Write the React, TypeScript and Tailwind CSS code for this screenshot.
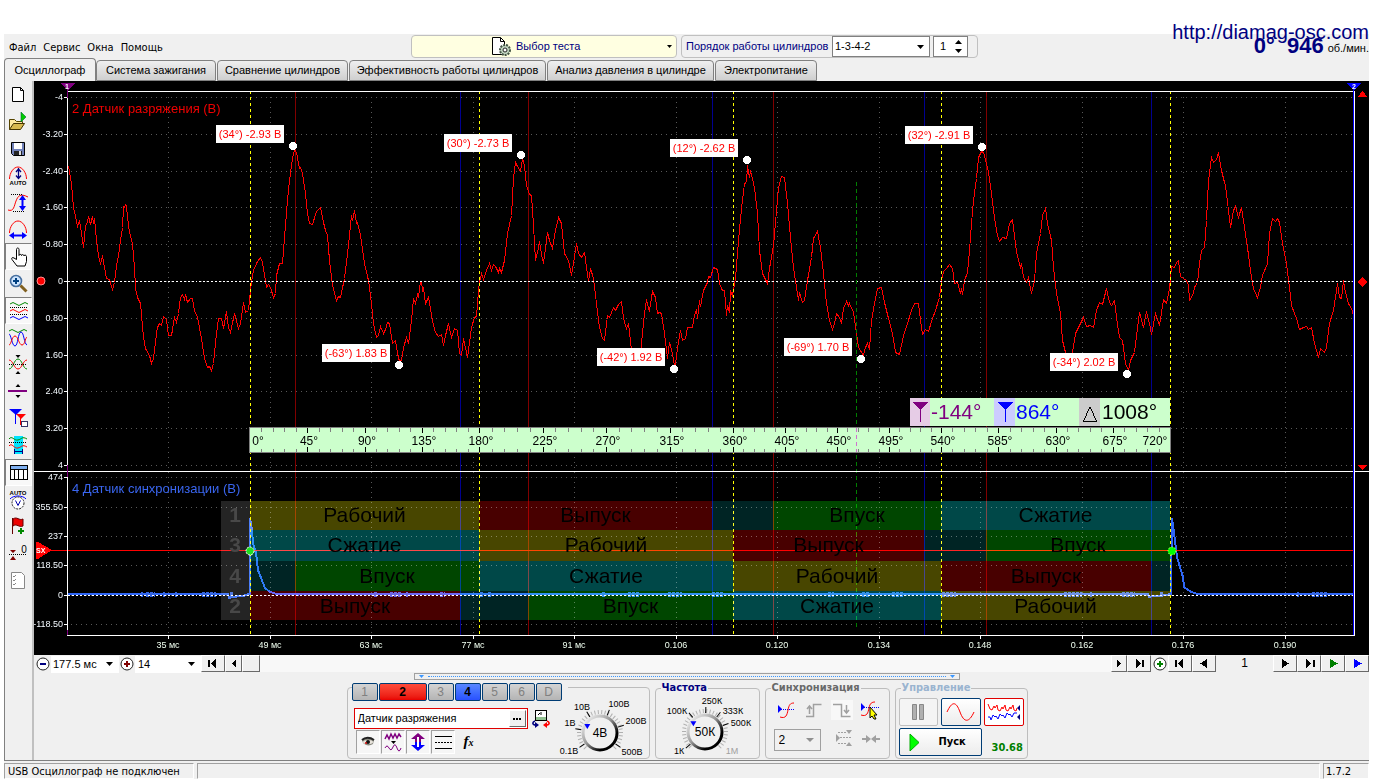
import { ReactNode } from 'react';
import clsx from 'clsx';

/* ------------------------------------------------------------------ */
/* Data                                                                */
/* ------------------------------------------------------------------ */

const menuItems = ['Файл', 'Сервис', 'Окна', 'Помощь'];

const tabs = [
  { title: 'Система зажигания', width: 'w-[120px]' },
  { title: 'Сравнение цилиндров', width: 'w-[131px]' },
  { title: 'Эффективность работы цилиндров', width: 'w-[197px]' },
  { title: 'Анализ давления в цилиндре', width: 'w-[167px]' },
  { title: 'Электропитание', width: 'w-[102px]' },
];

const gridX = [
  { x: 168, label: '35 мс' },
  { x: 270, label: '49 мс' },
  { x: 371, label: '63 мс' },
  { x: 473, label: '77 мс' },
  { x: 574, label: '91 мс' },
  { x: 676, label: '0.106' },
  { x: 777, label: '0.120' },
  { x: 879, label: '0.134' },
  { x: 980, label: '0.148' },
  { x: 1082, label: '0.162' },
  { x: 1183, label: '0.176' },
  { x: 1285, label: '0.190' },
];

const gridY = [
  { y: 97, label: '-4' },
  { y: 134, label: '-3.20' },
  { y: 171, label: '-2.40' },
  { y: 207, label: '-1.60' },
  { y: 244, label: '-0.80' },
  { y: 281, label: '0' },
  { y: 318, label: '0.80' },
  { y: 355, label: '1.60' },
  { y: 391, label: '2.40' },
  { y: 428, label: '3.20' },
  { y: 465, label: '4' },
  { y: 477, label: '474' },
  { y: 507, label: '355.50' },
  { y: 536, label: '237' },
  { y: 565, label: '118.50' },
  { y: 595, label: '0' },
  { y: 624, label: '-118.50' },
];

// 0, 180, 360, 540 and 720 degrees
const deadCenters = [250, 479, 733, 941, 1170];
const valveOpen = [295, 528, 773, 986];
const valveClose = [460, 712, 924, 1151];

const callouts = [
  { x: 216, y: 125, text: '(34°) -2.93 В', dot: [293, 146] },
  { x: 444, y: 134, text: '(30°) -2.73 В', dot: [521, 155] },
  { x: 670, y: 139, text: '(12°) -2.62 В', dot: [747, 160] },
  { x: 905, y: 126, text: '(32°) -2.91 В', dot: [982, 147] },
  { x: 322, y: 344, text: '(-63°) 1.83 В', dot: [399, 365] },
  { x: 597, y: 348, text: '(-42°) 1.92 В', dot: [674, 369] },
  { x: 784, y: 338, text: '(-69°) 1.70 В', dot: [861, 359] },
  { x: 1050, y: 353, text: '(-34°) 2.02 В', dot: [1127, 374] },
];

const strokeColors: Record<string, string> = {
  'Рабочий': '#484600',
  'Выпуск': '#480000',
  'Впуск': '#004600',
  'Сжатие': '#004848',
  '': '#002424',
};

const cylinders = [
  { no: 1, y: 501, h: 29, base: 522, strokes: [[250, 479, 'Рабочий'], [479, 712, 'Выпуск'], [712, 773, ''], [773, 941, 'Впуск'], [941, 1170, 'Сжатие']] },
  { no: 3, y: 530, h: 31, base: 552, strokes: [[250, 479, 'Сжатие'], [479, 733, 'Рабочий'], [733, 924, 'Выпуск'], [924, 986, ''], [986, 1170, 'Впуск']] },
  { no: 4, y: 561, h: 30, base: 583, strokes: [[250, 295, ''], [295, 479, 'Впуск'], [479, 733, 'Сжатие'], [733, 941, 'Рабочий'], [941, 1151, 'Выпуск'], [1151, 1170, '']] },
  { no: 2, y: 591, h: 29, base: 613, strokes: [[250, 460, 'Выпуск'], [460, 528, ''], [528, 733, 'Впуск'], [733, 941, 'Сжатие'], [941, 1170, 'Рабочий']] },
] as { no: number; y: number; h: number; base: number; strokes: [number, number, string][] }[];

const vacuumTrace =
  '68,166 70,177 71,183 73,207 75,216 77,226 79,220 81,233 83,247 85,225 87,222 88,216 90,224 92,216 93,223 94,218 96,240 98,255 100,264 102,255 ' +
  '104,267 106,278 109,279 110,283 112,289 114,282 116,265 118,255 120,240 122,227 123,206 124,207 125,204 126,205 127,217 129,232 132,243 134,267 135,288 137,297 ' +
  '140,303 143,337 145,348 149,355 151,363 153,358 156,333 157,327 159,323 161,325 163,316 166,319 168,335 171,335 174,317 176,322 178,313 180,297 182,294 184,299 ' +
  '185,294 187,302 190,298 192,298 194,310 197,317 201,338 204,358 207,367 209,366 211,370 213,363 216,333 218,318 221,318 223,328 226,311 228,327 230,332 234,313 ' +
  '238,328 240,323 243,302 245,312 248,310 250,290 251,282 253,270 257,261 260,257 262,262 266,287 268,284 270,287 273,297 275,293 276,275 279,263 282,263 284,237 ' +
  '287,200 289,180 292,158 294,149 296,152 299,168 300,167 302,173 305,193 307,213 309,223 312,224 316,211 320,207 323,222 325,230 327,235 329,260 332,285 336,300 ' +
  '338,296 340,297 344,278 348,245 351,215 352,220 354,210 356,223 357,222 360,235 364,263 368,280 371,303 373,323 376,337 378,335 380,326 383,333 385,329 387,322 ' +
  '389,323 392,343 395,340 397,353 399,361 401,360 403,347 406,337 408,343 411,320 413,298 415,303 417,294 418,297 420,281 421,281 422,290 423,288 425,303 428,297 ' +
  '430,308 432,321 435,332 438,336 441,334 443,345 445,335 448,323 451,337 454,328 457,330 459,353 461,355 463,338 467,357 471,327 474,317 476,316 478,290 479,282 ' +
  '481,273 483,279 486,270 489,263 491,270 493,264 495,266 498,272 499,268 501,272 504,260 507,233 511,215 513,178 515,162 517,166 520,171 522,158 524,165 526,185 ' +
  '529,194 531,195 533,225 535,260 538,247 539,241 541,254 543,263 547,232 549,240 552,248 555,230 558,217 561,223 564,253 568,260 571,275 573,263 576,243 578,253 ' +
  '581,257 584,252 586,267 588,281 590,268 593,278 596,303 599,327 602,338 604,340 607,315 609,317 613,307 615,310 618,304 621,301 623,318 626,328 628,323 631,350 ' +
  '635,358 640,353 641,343 644,313 646,299 648,308 649,310 652,291 655,297 657,313 659,312 661,313 664,333 667,358 669,342 672,353 674,365 675,363 677,348 680,330 ' +
  '682,340 685,338 687,327 692,327 694,315 696,309 697,318 699,300 700,306 703,290 707,282 708,276 710,277 713,267 717,269 719,283 722,290 724,290 726,315 727,305 ' +
  '729,312 730,291 732,295 735,278 738,240 741,208 744,183 746,182 747,165 749,177 750,170 753,183 754,187 757,213 759,250 762,273 767,283 769,268 773,245 775,222 ' +
  '778,187 781,176 784,177 787,203 790,237 793,267 796,287 798,300 799,292 802,302 804,300 807,280 811,257 813,238 817,231 820,247 823,273 826,303 829,320 832,329 ' +
  '834,323 836,313 839,317 841,323 843,308 846,301 848,305 849,303 853,312 856,333 858,347 863,355 865,347 867,343 869,349 871,320 874,303 877,288 881,287 884,302 ' +
  '888,318 892,333 895,352 899,354 903,335 907,323 911,310 914,303 918,303 920,320 922,334 925,329 928,331 932,318 935,310 939,297 941,280 943,271 946,268 949,264 ' +
  '952,268 954,283 957,282 960,293 961,288 962,294 964,280 967,272 969,250 971,223 973,200 976,178 978,157 981,151 983,152 986,163 988,172 991,193 994,217 997,235 ' +
  '999,241 1002,237 1006,238 1009,223 1012,219 1014,235 1016,252 1020,267 1021,263 1023,277 1026,282 1028,277 1031,293 1034,280 1036,253 1040,233 1042,215 1045,208 ' +
  '1047,223 1051,240 1053,267 1056,293 1060,313 1062,340 1065,352 1067,355 1072,352 1075,333 1079,325 1083,317 1086,326 1090,325 1093,327 1096,310 1099,302 1102,304 ' +
  '1106,288 1109,302 1111,305 1114,300 1116,317 1119,337 1122,340 1125,363 1128,370 1130,360 1134,352 1137,327 1139,312 1143,327 1146,311 1149,323 1151,334 1155,313 ' +
  '1159,325 1163,299 1166,303 1169,288 1171,266 1174,267 1176,262 1178,260 1180,276 1183,278 1186,280 1188,285 1189,300 1193,293 1194,287 1197,282 1199,263 1201,250 ' +
  '1204,247 1206,220 1208,180 1211,157 1213,162 1216,159 1218,152 1221,170 1224,182 1225,185 1228,210 1230,227 1233,210 1235,206 1238,217 1241,207 1244,227 1247,247 ' +
  '1250,270 1253,288 1257,297 1260,287 1262,275 1267,263 1269,233 1272,218 1275,221 1277,218 1279,222 1282,243 1286,263 1289,287 1291,305 1296,318 1299,329 1303,327 ' +
  '1306,326 1308,329 1311,327 1314,343 1318,357 1320,348 1324,352 1326,347 1329,323 1333,310 1337,283 1339,297 1341,298 1343,280 1345,292 1348,303 1352,310 1353,317';

const syncTrace =
  '68,594 228,594 229,598 232,597 236,597 237,596 243,596 249,594 250,594 250,518 252,530 253,543 256,553 ' +
  '258,570 263,583 265,588 270,592 277,594 297,594 298,595 299,594 1148,594 1149,597 1153,596 1160,596 1171,594 1172,518 1174,533 1177,557 1183,577 1184,587 1191,592 1198,594 1205,594 1353,594';

// short bursts of noise on the sync channel: start and length
const syncNoise = [
  [141, 2], [146, 9], [163, 2], [175, 2], [202, 14], [230, 3], [374, 3], [390, 12], [406, 2], [440, 5], [480, 3], [488, 4],
  [602, 4], [628, 12], [668, 14], [712, 4], [716, 8], [828, 6], [862, 8], [892, 12], [942, 14], [1064, 18], [1090, 2], [1122, 13], [1160, 4], [1297, 2], [1312, 16],
];

const rulerX = (deg: number) => {
  const i = Math.min(Math.floor(deg / 180), 3);
  return Math.round(deadCenters[i] + ((deadCenters[i + 1] - deadCenters[i]) * (deg - i * 180)) / 180);
};

/* ------------------------------------------------------------------ */
/* Small controls                                                      */
/* ------------------------------------------------------------------ */

function NavButton({ label, width, children }: { label: string; width: string; children: ReactNode }) {
  return (
    <button
      aria-label={label}
      className={clsx(
        'flex h-[17px] shrink-0 items-center justify-center border border-t-white border-l-white border-r-[#696969] border-b-[#696969] bg-[#f0f0f0]',
        width,
      )}
    >
      <svg width="14" height="11" viewBox="0 0 14 11" shapeRendering="crispEdges">{children}</svg>
    </button>
  );
}

function ZoomSign({ plus, color }: { plus?: boolean; color: string }) {
  return (
    <svg width="14" height="14" viewBox="0 0 14 14">
      <circle cx="7" cy="7" r="6" fill="#fff" stroke="#222" />
      <rect x="4" y="6" width="6" height="2" fill={color} />
      {plus && <rect x="6" y="4" width="2" height="6" fill={color} />}
    </svg>
  );
}

function Group({ title, titleClass, className, children }: { title: string; titleClass: string; className: string; children: ReactNode }) {
  return (
    <fieldset className={clsx('h-[78px] min-w-0 shrink-0 rounded border border-[#bdbdbd] px-[3px]', className)}>
      <legend className={clsx('ml-[2px] h-[14px] px-px font-[DejaVu_Sans_Condensed,DejaVu_Sans,sans-serif] text-[11px] leading-[14px] font-bold', titleClass)}>
        {title}
      </legend>
      {children}
    </fieldset>
  );
}

type KnobMark = { text: string; x: number; y: number; dim?: boolean };

function Knob({ value, pointer, marks, ticks, width }: { value: string; pointer: number; marks: KnobMark[]; ticks: number[]; width: number }) {
  const small = Array.from({ length: 30 }, (_, i) => 135 + i * (270 / 29));
  const cx = 50;
  const cy = 45;
  return (
    <svg className="shrink-0" width={width} height="70" viewBox={`0 0 ${width} 70`} role="img" aria-label={value}>
      <defs>
        <linearGradient id={`rim-${value}`} x1="0" y1="0" x2="1" y2="1">
          <stop offset="0" stopColor="#fff" />
          <stop offset="0.45" stopColor="#999" />
          <stop offset="0.75" stopColor="#000" />
        </linearGradient>
      </defs>
      {small.map((a) => (
        <line key={a} x1="19" x2="23" y1="0" y2="0" stroke="#b0b0b0" transform={`translate(${cx} ${cy}) rotate(${a})`} />
      ))}
      {ticks.map((a) => (
        <line key={a} x1="19" x2="25" y1="0" y2="0" stroke="#000" transform={`translate(${cx} ${cy}) rotate(${a})`} />
      ))}
      <circle cx={cx} cy={cy} r="17" fill="#f0f0f0" stroke={`url(#rim-${value})`} strokeWidth="3" />
      <path d="M-3 -3h6l-3 5z" fill="#00f" transform={`translate(${cx} ${cy}) rotate(${pointer}) translate(14 0) rotate(${-pointer})`} />
      <text x={cx} y={cy + 4} textAnchor="middle" fontSize="12" fill="#000">{value}</text>
      {marks.map((m) => (
        <text key={m.text} x={m.x} y={m.y} textAnchor="middle" fontSize="9" fill={m.dim ? '#a0a0a0' : '#000'}>{m.text}</text>
      ))}
    </svg>
  );
}

/* ------------------------------------------------------------------ */
/* Left toolbar                                                        */
/* ------------------------------------------------------------------ */

const tools: { label: string; pressed?: boolean; icon: ReactNode }[] = [
  { label: 'Новый', icon: <path d="M4.500 3.500h8l3 3v11h-11zM12.500 3.500v3h3" fill="#fff" stroke="#000" /> },
  {
    label: 'Открыть',
    icon: (
      <>
        <path d="M1.500 18.500v-10h5l2 2h6v2" fill="#ffe9a0" stroke="#554400" />
        <path d="M1.500 18.500l4-6h11l-4 6z" fill="#d8b850" stroke="#443300" />
        <path d="M13 1l5 5-5 5z" fill="#0c0" stroke="#063" strokeWidth=".6" />
      </>
    ),
  },
  {
    label: 'Сохранить',
    icon: (
      <>
        <path d="M3.500 4.500h13v13h-11l-2-2z" fill="#7080b8" stroke="#000" />
        <rect x="6" y="5" width="8" height="6" fill="#fff" />
        <rect x="6" y="13" width="8" height="4" fill="#222" />
        <rect x="11" y="13" width="2" height="4" fill="#ddd" />
      </>
    ),
  },
  {
    label: 'Автомасштаб',
    icon: (
      <>
        <path d="M1.500 14c0-6 4-12 8.500-12s8.500 6 8.500 12" fill="none" stroke="#f00" />
        <path d="M10.500 3v10M8 7l2.500-3L13 7M8 10.500l2.500 3 2.500-3" fill="none" stroke="#000080" strokeWidth="1.300" />
        <text x="10" y="20" textAnchor="middle" fontSize="6" fontWeight="bold">AUTO</text>
      </>
    ),
  },
  {
    label: 'Размах',
    icon: (
      <>
        <path d="M0 18c6 2 6-4 8-9s4-8 12-4" fill="none" stroke="#f00" />
        <path d="M3 2.500h12M5 19.500h12" stroke="#000" strokeDasharray="1 1" />
        <path d="M14.500 5v12" stroke="#00f" strokeWidth="2" />
        <path d="M11 8l3.500-5L18 8zM11 14l3.500 5 3.500-5z" fill="#00f" />
      </>
    ),
  },
  {
    label: 'Период',
    icon: (
      <>
        <path d="M1.500 14c0-6 4-12 8.500-12s8.500 6 8.500 12" fill="none" stroke="#f00" />
        <path d="M4 16.500h12" stroke="#00f" strokeWidth="2" />
        <path d="M6 13l-5 3.500L6 20zM14 13l5 3.500-5 3.500z" fill="#00f" />
      </>
    ),
  },
  {
    label: 'Рука',
    pressed: true,
    icon: (
      <path
        d="M8.500 13.500v-10c0-2 2.500-2 2.500 0v6c0-1.500 2.500-1.500 2.500 0 0-1.500 2.500-1 2.500.5 0-1.500 2.500-1 2.500.5v5l-1.500 4.500h-8l-5-6.500c-1-1.500.5-2.500 2-1.500z"
        fill="#fff"
        stroke="#000"
      />
    ),
  },
  {
    label: 'Лупа',
    icon: (
      <>
        <circle cx="8" cy="8" r="5.500" fill="#cfe6ff" stroke="#4870a0" strokeWidth="1.600" />
        <path d="M8 5v6M5 8h6" stroke="#004080" strokeWidth="2" />
        <path d="M12.500 12.500l6 6" stroke="#806020" strokeWidth="3" />
      </>
    ),
  },
  {
    label: 'Раздельно',
    pressed: true,
    icon: (
      <g fill="none">
        <path d="M2 4q3-3 6 0t6 0 6 0" stroke="#080" />
        <path d="M2 7.500h18M2 14.500h18" stroke="#000" strokeDasharray="1 1" />
        <path d="M2 11q3-3 6 0t6 0 6 0" stroke="#f00" />
        <path d="M2 18q3-3 6 0t6 0 6 0" stroke="#00f" />
      </g>
    ),
  },
  {
    label: 'Совместно',
    icon: (
      <g fill="none">
        <path d="M1 4q3-3 6 0t6 0 6 0" stroke="#080" />
        <path d="M1 7c2 0 3 12 6 12s3-14 6-14 3 12 6 13" stroke="#00f" />
        <path d="M1 18c2 0 3-9 6-9s4 9 7 9 3-7 5-8" stroke="#f00" />
      </g>
    ),
  },
  {
    label: 'Центровать',
    icon: (
      <g fill="none">
        <path d="M1 15c4 0 5-10 9-10s5 10 9 10" stroke="#080" />
        <path d="M1 6c4 0 5 9 9 9s5-9 9-9" stroke="#f00" />
        <path d="M1 10.500h18" stroke="#000" strokeDasharray="1 1" />
        <path d="M7.500 1h5L10 4zM7.500 20h5L10 17z" fill="#000" />
      </g>
    ),
  },
  {
    label: 'Уровень',
    icon: (
      <>
        <rect x="0" y="9" width="19" height="2" fill="#800080" />
        <path d="M7.500 6h5L10 3zM7.500 14h5L10 17z" fill="#000" />
      </>
    ),
  },
  {
    label: 'Маркеры',
    icon: (
      <>
        <path d="M1 1h13L8 7z" fill="#00f" />
        <path d="M7.500 3v13" stroke="#00f" />
        <path d="M8 6h10l-5 5z" fill="#f00" />
        <path d="M12.500 8v9" stroke="#f00" />
        <rect x="13.500" y="13.500" width="6" height="5" fill="#fff" stroke="#336" />
      </>
    ),
  },
  {
    label: 'Область',
    icon: (
      <g fill="none">
        <rect x="6" y="1" width="9" height="18" fill="#00e5ff" />
        <path d="M1 4c3-4 5 2 9 1s4-4 9-1" stroke="#080" />
        <path d="M1 7.500h18" stroke="#000" strokeDasharray="1 1" />
        <path d="M1 11c3-4 5 3 9 2s4-4 9-1" stroke="#f00" />
        <path d="M6 16.500h9M6.500 14v5M14.500 14v5" stroke="#000080" />
      </g>
    ),
  },
  {
    label: 'Таблица',
    pressed: true,
    icon: (
      <>
        <rect x="2.500" y="3.500" width="17" height="14" fill="#fff" stroke="#000" />
        <rect x="3" y="4" width="16" height="3" fill="#80b0f0" />
        <path d="M2 7.500h18M6.500 7v10M10.500 7v10M15.500 7v10" stroke="#000" />
      </>
    ),
  },
  {
    label: 'Автоизмерение',
    icon: (
      <>
        <text x="10" y="6" textAnchor="middle" fontSize="6" fontWeight="bold">AUTO</text>
        <path d="M2 10c3-4 13-4 16 0" fill="none" stroke="#00f" />
        <circle cx="10" cy="14" r="6" fill="#fff" stroke="#222" strokeDasharray="2 1" />
        <path d="M7.500 11.500l2.500 5 2.500-5" fill="none" stroke="#00a" />
      </>
    ),
  },
  {
    label: 'Метка',
    icon: (
      <>
        <path d="M4.500 2v16" stroke="#600" />
        <path d="M5 3c4-3 6 2 10 0v7c-4 2-6-3-10 0z" fill="#e00" stroke="#600" />
        <path d="M13 12v6M10 15h6" stroke="#080" strokeWidth="2" />
      </>
    ),
  },
  {
    label: 'Ноль',
    icon: (
      <>
        <path d="M2 7h6l-3 3zM2 17h6l-3-4z" fill="#800000" />
        <path d="M1 11.500h18" stroke="#000" strokeDasharray="1 1" />
        <text x="16" y="10" textAnchor="middle" fontSize="10">0</text>
      </>
    ),
  },
  {
    label: 'Отчёт',
    icon: (
      <>
        <path d="M3.500 2.500h10l3 3v13h-13z" fill="#fff" stroke="#888" />
        <path d="M5 6l1 1 2-2M5 10l1 1 2-2M5 14l1 1 2-2" fill="none" stroke="#888" />
      </>
    ),
  },
];

function Toolbar() {
  return (
    <div className="flex w-[29px] shrink-0 flex-col border-r-2 border-r-[#c0c0c0]">
      {tools.map((tool) => (
        <button
          key={tool.label}
          aria-label={tool.label}
          aria-pressed={tool.pressed}
          className={clsx(
            'flex h-[27px] w-full items-center justify-center border',
            tool.pressed ? 'border-t-[#808080] border-l-[#808080] border-r-white border-b-white bg-[#f8f8f8]' : 'border-transparent',
          )}
        >
          <svg width="22" height="22" viewBox="0 0 22 22">{tool.icon}</svg>
        </button>
      ))}
    </div>
  );
}

/* ------------------------------------------------------------------ */
/* Oscilloscope screen                                                 */
/* ------------------------------------------------------------------ */

function Ruler() {
  const degrees = Array.from({ length: 81 }, (_, i) => i * 9);
  return (
    <g>
      <rect x="249" y="427" width="922" height="26" fill="#808080" />
      <rect x="250" y="428" width="920" height="24" fill="#ccffcc" />
      {degrees.slice(1, -1).map((deg) => {
        const major = deg % 45 === 0;
        return (
          <g key={deg} fill={major ? '#000' : '#808080'}>
            <rect x={rulerX(deg)} y="428" width="1" height={major ? 5 : 4} />
            <rect x={rulerX(deg)} y={major ? 447 : 449} width="1" height={major ? 5 : 3} />
          </g>
        );
      })}
      {Array.from({ length: 17 }, (_, i) => i * 45).map((deg) => (
        <text
          key={deg}
          x={deg === 0 ? 258 : deg === 720 ? 1155 : rulerX(deg) + 2}
          y="445"
          textAnchor="middle"
          fontSize="12"
          fill="#000"
        >
          {deg}°
        </text>
      ))}
      <line x1="856.500" x2="856.500" y1="428" y2="452" stroke="#d070d0" strokeDasharray="4 3" />
    </g>
  );
}

function MarkerReadout() {
  return (
    <g fontSize="21">
      <rect x="910" y="398" width="260" height="28" fill="#ccffcc" />
      <rect x="910" y="398" width="20" height="28" fill="#e6cce6" />
      <rect x="994" y="398" width="21" height="28" fill="#ccccff" />
      <rect x="1079" y="398" width="21" height="28" fill="#cccccc" />
      <path d="M912 402h16l-7 7v13h-1v-13z" fill="#800080" />
      <path d="M997 402h16l-7 7v13h-1v-13z" fill="#0000ff" />
      <path d="M1083.500 421.500h13l-6-14h-1z" fill="none" stroke="#000" />
      <text x="931" y="419" fill="#800080">-144°</text>
      <text x="1016" y="419" fill="#0000ff">864°</text>
      <text x="1102" y="419" fill="#000">1008°</text>
    </g>
  );
}

function Screen() {
  return (
    <svg
      viewBox="34 81 1335 574"
      className="isolate block h-auto w-full bg-black"
      fontFamily="Liberation Sans, Arial, sans-serif"
      shapeRendering="crispEdges"
      role="img"
      aria-label="Осциллограмма"
    >
      {/* dotted grid */}
      <g stroke="#585858" strokeDasharray="1 4" transform="translate(.5 .5)">
        {gridY.map(({ y }) => <line key={y} x1="70" x2="1353" y1={y} y2={y} />)}
        {gridX.map(({ x }) => <line key={x} x1={x} x2={x} y1="96" y2="635" />)}
      </g>

      {/* valve timing lines */}
      {valveOpen.map((x) => <rect key={x} x={x} y="92" width="1" height="543" fill="#800000" />)}
      {valveClose.map((x) => <rect key={x} x={x} y="92" width="1" height="543" fill="#000090" />)}

      <polyline points={vacuumTrace} fill="none" stroke="#ff0000" transform="translate(.5 .5)" />

      {/* sync channel */}
      <polyline points={syncTrace} fill="none" stroke="#2f66f5" strokeWidth="2" />
      <g stroke="#3566e0" strokeWidth="5" strokeDasharray="3 1">
        {syncNoise.map(([x, w]) => <line key={x} x1={x} x2={x + w} y1="594.500" y2="594.500" />)}
      </g>
      <rect x="50" y="550" width="1303" height="1" fill="#ff0000" />

      {/* zero levels */}
      <g stroke="#fff" strokeDasharray="2 2" transform="translate(.5 .5)">
        <line x1="67" x2="1353" y1="281" y2="281" />
        <line x1="67" x2="1353" y1="595" y2="595" />
      </g>

      {/* dead centers */}
      <g stroke="#ffff00" strokeDasharray="3 3" transform="translate(.5 0)">
        {deadCenters.map((x) => <line key={x} x1={x} x2={x} y1="91" y2="635" />)}
      </g>
      <line x1="856.500" x2="856.500" y1="182" y2="629" stroke="#008000" strokeDasharray="4 3" />

      {/* axes */}
      <g fill="#fff">
        <rect x="67" y="91" width="1288" height="1" />
        <rect x="34" y="471" width="1335" height="1" />
        <rect x="67" y="635" width="1288" height="1" />
        <rect x="67" y="91" width="1" height="545" />
        <rect x="1354" y="91" width="1" height="545" />
        {gridY.map(({ y }) => <rect key={y} x="64" y={y} width="3" height="1" />)}
        {gridX.map(({ x }) => <rect key={x} x={x} y="636" width="1" height="3" />)}
      </g>
      <rect x="67" y="88" width="1" height="10" fill="#800080" />
      <rect x="67" y="465" width="1" height="12" fill="#800080" />
      <rect x="67" y="630" width="1" height="5" fill="#800080" />
      <rect x="1353" y="88" width="1" height="547" fill="#0000ff" />

      <g fontSize="9" fill="#f4faff" textAnchor="end">
        {gridY.map(({ y, label }) => <text key={y} x="63" y={y + 3}>{label}</text>)}
      </g>
      <g fontSize="9" fill="#f0fff0" textAnchor="middle">
        {gridX.map(({ x, label }) => <text key={x} x={x} y="648">{label}</text>)}
      </g>

      {/* cylinder strokes */}
      {cylinders.map((cyl) => (
        <g key={cyl.no} className="mix-blend-screen">
          <rect x="221" y={cyl.y} width="29" height={cyl.h} fill="#242424" />
          {cyl.strokes.map(([from, to, name]) => (
            <rect key={from} x={from} y={cyl.y} width={to - from} height={cyl.h} fill={strokeColors[name]} />
          ))}
        </g>
      ))}
      {cylinders.map((cyl) => (
        <g key={cyl.no} fontSize="21" textAnchor="middle">
          <text x="235" y={cyl.base} fontWeight="bold" fill="#484848">{cyl.no}</text>
          {cyl.strokes.map(([from, to, name]) => (
            <text key={from} x={(from + to) / 2} y={cyl.base} fill="#000">{name}</text>
          ))}
        </g>
      ))}

      <text x="72" y="113" fontSize="13" fill="#f00000">2 Датчик разряжения (В)</text>
      <text x="72" y="493" fontSize="13" fill="#3a66f0">4 Датчик синхронизации (В)</text>

      {callouts.map((c) => (
        <g key={c.text}>
          <rect x={c.x} y={c.y} width="68" height="18" fill="#fff" />
          <text x={c.x + 34} y={c.y + 13} textAnchor="middle" fontSize="11" fill="#ff0000">{c.text}</text>
          <circle cx={c.dot[0]} cy={c.dot[1]} r="4" fill="#fff" />
        </g>
      ))}

      <MarkerReadout />
      <Ruler />

      {/* trigger level and points */}
      <path d="M36 542h2l14 8-14 9h-2z" fill="#ff0000" />
      <text x="36" y="553" fontSize="7" fontWeight="bold" fill="#fff">SX</text>
      <g shapeRendering="geometricPrecision">
        <circle cx="250" cy="551" r="4" fill="#22dd22" stroke="#fff" strokeDasharray="2 1" />
        <circle cx="1172" cy="551" r="4" fill="#00ff00" stroke="#ffff80" strokeDasharray="1 2" />
        <circle cx="41" cy="281" r="4" fill="#ff0000" stroke="#ff9090" />
      </g>

      {/* channel handles */}
      <path d="M1358 97h9l-4-6h-1zM1362 277l5 5-5 5-4-5zM1358 465h9l-4 5h-1z" fill="#ff0000" />
      <path d="M60 83h15l-7 7h-1z" fill="#800080" />
      <path d="M1346 83h15l-7 7h-1z" fill="#0000ff" />
      <g fontSize="7" fontWeight="bold" fill="#fff" textAnchor="middle">
        <text x="67" y="89">1</text>
        <text x="1354" y="89">2</text>
      </g>
    </svg>
  );
}

/* ------------------------------------------------------------------ */
/* Header                                                              */
/* ------------------------------------------------------------------ */

function Header() {
  return (
    <header className="relative flex h-6 items-center text-[11px]">
      <nav className="flex w-[407px] shrink-0 gap-[7px] pt-[3px] pl-[5px]">
        {menuItems.map((item) => (
          <button key={item} className="font-[DejaVu_Sans_Condensed,DejaVu_Sans,sans-serif] leading-4">{item}</button>
        ))}
      </nav>
      <button className="relative flex h-[23px] w-[266px] shrink-0 items-center rounded border border-[#c0c0c0] bg-[#ffffe1] pl-[79px] text-[#000080]">
        <svg width="22" height="21" viewBox="0 0 22 21">
          <path d="M1.500 1.500h8l4 4v13h-12z" fill="#fff" stroke="#000" />
          <path d="M9.500 1.500v4h4" fill="none" stroke="#000" />
          <circle cx="14" cy="14" r="5" fill="#c0d4c0" stroke="#445544" strokeWidth="2" strokeDasharray="2 1" />
          <circle cx="14" cy="14" r="2" fill="#fff" stroke="#222" />
        </svg>
        <span className="ml-[3px]">Выбор теста</span>
        <svg className="mr-1 ml-auto" width="5" height="3" viewBox="0 0 5 3"><path d="M0 0h5L2.500 3z" /></svg>
      </button>
      <div className="ml-[4px] flex h-[23px] w-[297px] shrink-0 items-center rounded border border-[#c0c0c0] pl-1">
        <label htmlFor="order" className="w-[146px] whitespace-nowrap text-[#000080]">Порядок работы цилиндров</label>
        <div className="relative">
          <select id="order" className="h-[21px] w-[98px] appearance-none border border-[#808080] bg-white pl-[2px]">
            <option>1-3-4-2</option>
          </select>
          <svg className="pointer-events-none absolute top-[9px] right-[6px]" width="7" height="4" viewBox="0 0 7 4"><path d="M0 0h7L3.500 4z" /></svg>
        </div>
        <div className="relative ml-[3px]">
          <input aria-label="Цилиндр" defaultValue="1" className="h-[21px] w-[35px] border border-[#808080] bg-white pl-[6px]" />
          <svg className="pointer-events-none absolute top-[4px] right-[6px]" width="7" height="13" viewBox="0 0 7 13">
            <path d="M0 4h7L3.500 0zM0 9h7L3.500 13z" />
          </svg>
        </div>
      </div>
      <div className="absolute top-0 right-0 flex items-center text-[#000080]">
        <span className="text-[22px] leading-6 font-bold whitespace-pre">0°  946</span>
        <span className="mt-1 ml-1 text-black">об./мин.</span>
      </div>
      <a href="http://diamag-osc.com" className="absolute right-0 bottom-[14px] text-[20px] leading-6 text-[#000080]">
        http://diamag-osc.com
      </a>
    </header>
  );
}

function Tabs() {
  return (
    <div className="flex h-[23px] items-end text-[11px]" role="tablist">
      <button role="tab" aria-selected="true" className="h-[23px] w-[92px] rounded-t border border-b-0 border-[#808080] bg-[#f0f0f0]">
        Осциллограф
      </button>
      {tabs.map((tab) => (
        <button
          key={tab.title}
          role="tab"
          aria-selected="false"
          className={clsx(
            'mr-px h-[21px] rounded-t border border-[#808080] bg-linear-to-b from-[#efefef] to-[#cfcfcf] whitespace-nowrap',
            tab.width,
          )}
        >
          {tab.title}
        </button>
      ))}
    </div>
  );
}

/* ------------------------------------------------------------------ */
/* Scroll bar under the screen                                         */
/* ------------------------------------------------------------------ */

function ScrollRow() {
  return (
    <div className="flex h-[18px] items-start">
      <button aria-label="Сжать" className="flex h-[17px] w-[17px] items-center justify-center"><ZoomSign color="#000080" /></button>
      <div className="relative">
        <select aria-label="Время" className="h-[17px] w-[68px] appearance-none bg-white pl-[2px] text-[11px] leading-4">
          <option>177.5 мс</option>
        </select>
        <svg className="pointer-events-none absolute top-[7px] right-[6px]" width="7" height="4" viewBox="0 0 7 4"><path d="M0 0h7L3.500 4z" /></svg>
      </div>
      <button aria-label="Растянуть" className="flex h-[17px] w-4 items-center justify-center"><ZoomSign plus color="#800000" /></button>
      <div className="relative">
        <select aria-label="Делений" className="h-[17px] w-[66px] appearance-none bg-white pl-[3px] text-[11px] leading-4">
          <option>14</option>
        </select>
        <svg className="pointer-events-none absolute top-[7px] right-[6px]" width="7" height="4" viewBox="0 0 7 4"><path d="M0 0h7L3.500 4z" /></svg>
      </div>
      <NavButton label="В начало" width="w-6"><path d="M2 2h2v7H2zM10 1v9L5 5.500z" /></NavButton>
      <NavButton label="Назад" width="w-[17px]"><path d="M9 1v9L5 5.500z" /></NavButton>
      <button aria-label="Ползунок" className="h-[17px] w-[18px] border border-t-white border-l-white border-r-[#696969] border-b-[#696969] bg-[#f0f0f0]" />
      <div className="h-[17px] min-w-0 flex-1 bg-[#f8f8f8]" />
      <NavButton label="Вперёд" width="w-4"><path d="M5 1v9l4-4.500z" /></NavButton>
      <NavButton label="В конец" width="w-6"><path d="M10 2h2v7h-2zM4 1v9l5-4.500z" /></NavButton>
      <button aria-label="Добавить кадр" className="flex h-[17px] w-[17px] items-center justify-center"><ZoomSign plus color="#008000" /></button>
      <NavButton label="Первый кадр" width="w-6"><path d="M2 2h2v7H2zM10 1v9L5 5.500z" /></NavButton>
      <NavButton label="Предыдущий кадр" width="w-6"><path d="M10 1v9L3 5.500z" /></NavButton>
      <span className="w-[57px] text-center leading-[17px]">1</span>
      <NavButton label="Следующий кадр" width="w-6"><path d="M4 1v9l7-4.500z" /></NavButton>
      <NavButton label="Последний кадр" width="w-6"><path d="M11 2h2v7h-2zM4 1v9l5-4.500z" /></NavButton>
      <NavButton label="Воспроизвести" width="w-6"><path d="M4 1v9l8-4.500z" fill="#008000" /></NavButton>
      <NavButton label="Повторять" width="w-6"><path d="M4 1v9l8-4.500z" fill="#0000ff" /></NavButton>
    </div>
  );
}

/* ------------------------------------------------------------------ */
/* Bottom panels                                                       */
/* ------------------------------------------------------------------ */

const channels = ['1', '2', '3', '4', '5', '6', 'D'];

function ToggleIcon({ label, children }: { label: string; children: ReactNode }) {
  return (
    <button
      aria-label={label}
      aria-pressed="true"
      className="flex h-6 w-6 items-center justify-center border border-t-[#a0a0a0] border-l-[#a0a0a0] border-r-white border-b-white bg-[#f6f6f6]"
    >
      <svg width="22" height="22" viewBox="0 0 22 22">{children}</svg>
    </button>
  );
}

function ChannelPanel() {
  return (
    <div className="h-[72px] w-[303px] shrink-0 rounded border border-[#bdbdbd] pl-1">
      <div className="-mt-[5px] flex w-[216px] gap-px bg-[#f0f0f0]">
        {channels.map((ch) => (
          <button
            key={ch}
            className={clsx(
              'h-[18px] rounded-xs border border-[#003c74] leading-4',
              ch === '2' && 'w-12 bg-linear-to-b from-[#ff4a3a] to-[#e80000] font-bold',
              ch === '4' && 'w-[26px] bg-linear-to-b from-[#5a86ff] to-[#2a50ff] font-bold',
              ch !== '2' && ch !== '4' && 'w-[26px] bg-linear-to-b from-[#d4d4d4] to-[#b4b4b4] text-[#808080]',
            )}
          >
            {ch}
          </button>
        ))}
      </div>
      <div className="flex">
        <div className="w-[198px] shrink-0">
          <div className="mt-[7px] ml-[2px] flex items-center">
            <div className="flex h-[21px] w-[177px] items-center border border-[#e00000] bg-white pr-px">
              <input aria-label="Датчик" defaultValue="Датчик разряжения" className="min-w-0 flex-1 pl-[3px] text-[11px]" />
              <button
                aria-label="Выбрать датчик"
                className="flex h-[17px] w-[17px] items-center justify-center border border-t-white border-l-white border-r-[#696969] border-b-[#696969] bg-[#f0f0f0]"
              >
                <svg width="8" height="2" viewBox="0 0 8 2"><path d="M0 0h2v2H0zM3 0h2v2H3zM6 0h2v2H6z" /></svg>
              </button>
            </div>
            <button aria-label="Прибор" className="ml-1 shrink-0">
              <svg width="18" height="19" viewBox="0 0 18 19">
                <rect x="3.500" y="1.500" width="11" height="10" fill="#fff" stroke="#000" />
                <rect x="4" y="8" width="10" height="3" fill="#90c090" />
                <path d="M6 6l2-2M9 3v3" stroke="#000" />
                <path d="M3 12c-3 1-3 4 1 4" fill="none" stroke="#000080" strokeWidth="1.500" />
                <path d="M3 13l4 3-4 3z" fill="#000080" />
                <path d="M15 12c3 1 3 4-1 4" fill="none" stroke="#f00" strokeWidth="1.500" />
                <path d="M15 13l-4 3 4 3z" fill="#f00" />
              </svg>
            </button>
          </div>
          <div className="mt-px ml-1 flex gap-px">
            <ToggleIcon label="Показать">
              <path d="M5 9c3-2 8-3 12 0l-1 4c-3 2-7 2-10-1z" fill="#8a8a80" />
              <ellipse cx="11" cy="11" rx="5" ry="2" fill="#e8e4dc" />
              <circle cx="11" cy="11" r="2" fill="#111" />
              <path d="M5 9c3-3 8-3 12 0" stroke="#222" fill="none" strokeWidth="2" />
              <circle cx="9" cy="12" r="1" fill="#c00" />
            </ToggleIcon>
            <ToggleIcon label="Фильтр">
              <path d="M3 8l2-4 2 4 2-5 2 4 2-4 2 4 2-4 2 3" fill="none" stroke="#800080" strokeWidth="1.500" />
              <path d="M9 10h5l-2.500 3z" fill="#000" />
              <path d="M3 17q2-4 4 0t4-1 4 1 4 0" fill="none" stroke="#800080" />
            </ToggleIcon>
            <ToggleIcon label="Инвертировать">
              <path d="M11 2l7 6h-4v3H8V8H4z" fill="#800080" />
              <path d="M11 20l7-6h-4v-3H8v3H4z" fill="#0000ff" />
              <path d="M11 6v10" stroke="#fff" strokeWidth="2" />
            </ToggleIcon>
            <ToggleIcon label="Уровни">
              <path d="M3 5.500h17M3 17.500h17" stroke="#000" />
              <path d="M3 11.500h17" stroke="#000" strokeDasharray="2 1" />
            </ToggleIcon>
            <button aria-label="Функция" className="ml-2 font-[Liberation_Serif,serif] text-[15px] leading-5 font-bold italic">f<span className="text-[10px]">x</span></button>
          </div>
        </div>
        <div className="-mt-[13px]">
          <Knob
            value="4В"
            pointer={205}
            width={98}
            ticks={[145, 190, 238, 292, 342, 35]}
            marks={[
              { text: '0.1В', x: 19, y: 66 },
              { text: '1В', x: 20, y: 38 },
              { text: '10В', x: 32, y: 22 },
              { text: '100В', x: 69, y: 19 },
              { text: '200В', x: 86, y: 36 },
              { text: '500В', x: 82, y: 67 },
            ]}
          />
        </div>
      </div>
    </div>
  );
}

function SyncPanel() {
  return (
    <Group title="Синхронизация" titleClass="text-[#696969]" className="w-[125px]">
      <div className="mt-[5px] flex justify-between pr-[5px] pl-[7px]">
        <button aria-label="Синхронизация по уровню">
          <svg width="20" height="20" viewBox="0 0 20 20">
            <path d="M2 5v8l4-4z" fill="#00f" />
            <path d="M5 9.500h13" stroke="#00f" strokeDasharray="1 1" />
            <path d="M4 17c6 2 7-2 8-7s2-7 6-7" fill="none" stroke="#f00" />
          </svg>
        </button>
        <button aria-label="По фронту" disabled>
          <svg width="20" height="20" viewBox="0 0 20 20">
            <path d="M3 16.500h7.500v-12h8M6.500 14V7M4 9l2.500-3L9 9" fill="none" stroke="#a0a0a0" strokeWidth="1.500" />
          </svg>
        </button>
        <button aria-label="По спаду" disabled className="bg-[#f8f8f8]">
          <svg width="22" height="20" viewBox="0 0 22 20">
            <path d="M2 4.500h8.500v12h9M15.500 5v7M13 10l2.500 3 2.500-3" fill="none" stroke="#a0a0a0" strokeWidth="1.500" />
          </svg>
        </button>
        <button aria-label="Указать уровень">
          <svg width="20" height="20" viewBox="0 0 20 20">
            <path d="M1 3v8l4-4z" fill="#00f" />
            <path d="M4 7.500h15" stroke="#00f" strokeDasharray="1 1" />
            <path d="M1 15c6 2 7-2 8-7s3-6 6-6" fill="none" stroke="#f00" />
            <path d="M10 7l7 8h-3l2 4h-2l-2-3-2 2z" fill="#ff0" stroke="#000" />
          </svg>
        </button>
      </div>
      <div className="mt-[9px] flex items-start pl-[5px]">
        <div className="relative">
          <select aria-label="Канал синхронизации" className="block h-[22px] w-[47px] appearance-none border border-[#a0a0a0] pl-1 text-[12px] leading-5">
            <option>2</option>
          </select>
          <svg className="pointer-events-none absolute top-[9px] right-[7px]" width="8" height="4" viewBox="0 0 8 4"><path d="M0 0h8L4 4z" fill="#909090" /></svg>
        </div>
        <button aria-label="Границы" disabled className="ml-[13px]">
          <svg width="20" height="20" viewBox="0 0 20 20">
            <path d="M2 5v8l4-4zM12 1h6l-3 4zM12 17h6l-3-4z" fill="#a0a0a0" />
            <path d="M4 3.500h9M4 14.500h9M6 8.500h12" stroke="#a0a0a0" strokeDasharray="2 1" />
          </svg>
        </button>
        <button aria-label="Сжать к центру" disabled className="ml-[7px]">
          <svg width="20" height="20" viewBox="0 0 20 20">
            <path d="M1 9h4V6l5 4-5 4v-3H1zM19 9h-4V6l-5 4 5 4v-3h4z" fill="#a0a0a0" />
          </svg>
        </button>
      </div>
    </Group>
  );
}

function ControlPanel() {
  return (
    <Group title="Управление" titleClass="text-[#9ab4d0]" className="w-[133px]">
      <div className="mt-[3px] flex gap-[3px]">
        <button aria-label="Пауза" disabled className="flex h-7 w-10 items-center justify-center rounded-xs border border-[#c0c0c0] bg-[#f4f4f4]">
          <svg width="12" height="16" viewBox="0 0 12 16">
            <path d="M.5.500h4v15h-4zM7.500.500h4v15h-4z" fill="#b0b0b0" stroke="#888" />
          </svg>
        </button>
        <button aria-label="Один кадр" className="flex h-7 w-10 items-center justify-center rounded-xs border border-[#003c74] bg-linear-to-b from-white to-[#ececec]">
          <svg width="30" height="22" viewBox="0 0 30 22"><path d="M1 11C6 0 10 0 14 11s9 11 14 0" fill="none" stroke="#f00" /></svg>
        </button>
        <button aria-label="Самописец" className="flex h-7 w-10 items-center justify-center rounded-xs border border-[#e00000] bg-white">
          <svg width="34" height="20" viewBox="0 0 34 20">
            <path d="M1 2l2 5 2 1 2-4 1 2 2-3 1 5 2 1 2-4 1 2 2-4 1 5 2 1 2-4 1 2 2-4 1 5 2 1 1-3" fill="none" stroke="#f00" />
            <path d="M1 15h2l1 3 2-5 2 2 1-1 2 3 2-5 2 2 1-1 2 3 2-5 2 2 1-1 2 3 2-4h3" fill="none" stroke="#00f" />
            <path d="M33 3v6l-3-3zM33 12v6l-3-3z" fill="#000080" />
          </svg>
        </button>
      </div>
      <div className="mt-[2px] flex items-center">
        <button className="flex h-7 w-[83px] items-center rounded-xs border border-[#003c74] bg-linear-to-b from-white to-[#ececec] pl-[9px] font-[DejaVu_Sans_Condensed,DejaVu_Sans,sans-serif] text-[11px] font-bold">
          <svg width="11" height="19" viewBox="0 0 11 19"><path d="M1 1v17l9-8.500z" fill="#0f0" stroke="#0a0" /></svg>
          <span className="ml-[19px]">Пуск</span>
        </button>
        <span className="mt-3 ml-[10px] font-[DejaVu_Sans_Condensed,DejaVu_Sans,sans-serif] text-[11px] leading-4 font-bold text-[#008000]">30.68</span>
      </div>
    </Group>
  );
}

function BottomPanels() {
  return (
    <div className="flex h-20 items-end justify-center gap-[5px] pb-px">
      <ChannelPanel />
      <Group title="Частота" titleClass="text-[#000080]" className="w-[105px]">
        <div className="-mt-2 -ml-1">
          <Knob
            value="50К"
            pointer={214}
            width={100}
            ticks={[140, 230, 272, 308, 340]}
            marks={[
              { text: '100К', x: 22, y: 27 },
              { text: '250К', x: 57, y: 17 },
              { text: '333К', x: 78, y: 27 },
              { text: '500К', x: 86, y: 39 },
              { text: '1К', x: 24, y: 67 },
              { text: '1М', x: 77, y: 67, dim: true },
            ]}
          />
        </div>
      </Group>
      <SyncPanel />
      <ControlPanel />
    </div>
  );
}

export default function App() {
  return (
    <div className="flex min-h-screen flex-col bg-white pt-[34px] pr-[13px] pl-1 font-[Liberation_Sans,Arial,sans-serif] text-[12px] text-black">
      <div className="flex flex-col bg-[#f0f0f0]">
        <Header />
        <Tabs />
        <div className="flex border-l border-[#808080]">
          <Toolbar />
          <main className="min-w-0 flex-1">
            <Screen />
            <ScrollRow />
            <div className="mr-[29px] flex justify-center">
              <div className="flex h-[7px] w-[546px] items-center border border-[#a0a0a0] px-1">
                <svg width="5" height="3" viewBox="0 0 5 3"><path d="M0 0h5L2.500 3z" fill="#3a96ff" /></svg>
                <div className="mx-1 flex-1 border-t border-dotted border-[#3a96ff]" />
                <svg width="5" height="3" viewBox="0 0 5 3"><path d="M0 0h5L2.500 3z" fill="#3a96ff" /></svg>
              </div>
            </div>
            <div className="mr-[29px]">
              <BottomPanels />
            </div>
          </main>
        </div>
        <footer className="flex h-[19px] gap-[3px] border-t border-[#808080] pt-[2px] font-[DejaVu_Sans_Condensed,DejaVu_Sans,sans-serif] text-[11px] leading-[15px]">
          <span className="w-[190px] border border-t-[#a0a0a0] border-r-white border-b-white border-l-[#a0a0a0] pl-[3px]">USB Осциллограф не подключен</span>
          <span className="flex-1 border border-t-[#a0a0a0] border-r-white border-b-white border-l-[#a0a0a0]" />
          <span className="w-[46px] border border-t-[#a0a0a0] border-r-white border-b-white border-l-[#a0a0a0] pl-[2px]">1.7.2</span>
        </footer>
      </div>
    </div>
  );
}
